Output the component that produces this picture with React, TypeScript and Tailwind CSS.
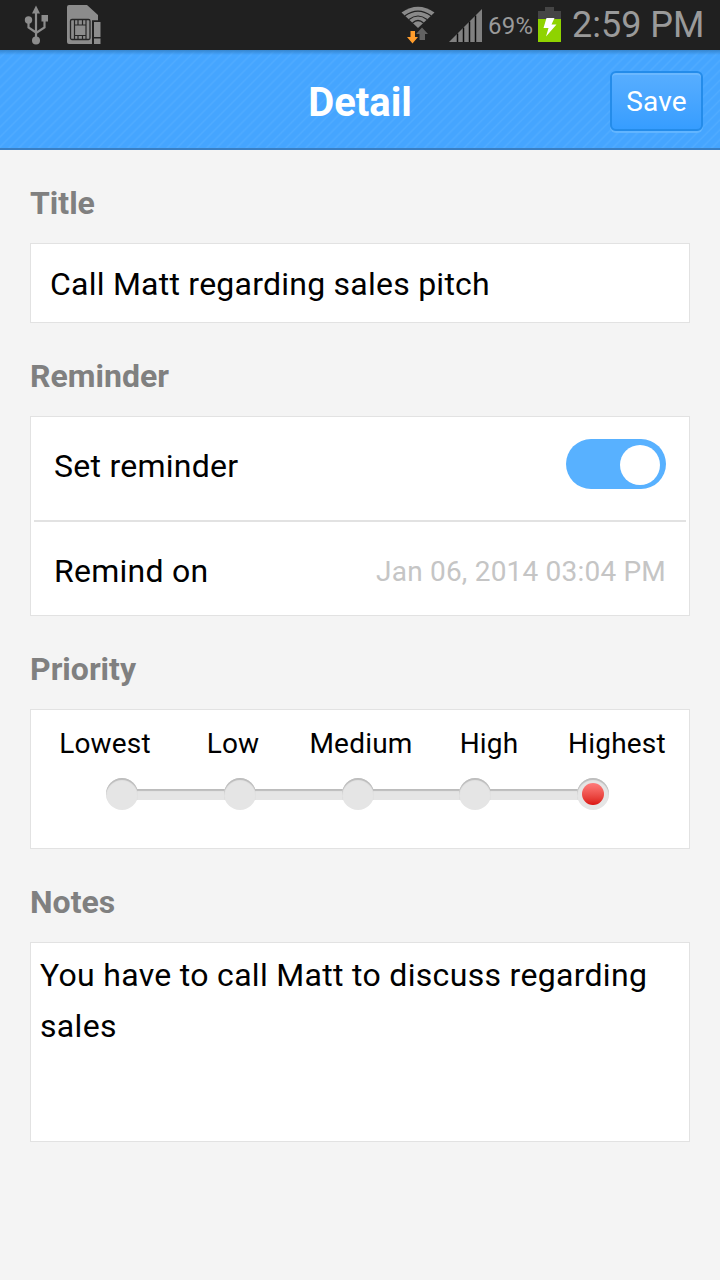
import { useState, type ReactNode } from "react";

const LEVELS = ["Lowest", "Low", "Medium", "High", "Highest"];

const UsbIcon = () => (
    <svg width="26" height="40" viewBox="0 0 26 40" fill="none" stroke="#8c8c8c" strokeWidth="2.2">
        <path d="M13 7v26M5.500 14v8.500l7.500 5M21.500 13v9.500L13 28" />
        <g fill="#8c8c8c" stroke="none">
            <path d="M13 0.500l4 8H9z" />
            <circle cx="5.500" cy="15" r="3.700" />
            <path d="M18.500 10h6.500v6.500h-6.500z" />
            <circle cx="13" cy="35.500" r="4" />
        </g>
    </svg>
);

const SimIcon = () => (
    <svg width="34" height="40" viewBox="0 0 34 40">
        <path d="M2 0h18l11 10v5.500h-6V39H2q-2 0-2-2V2q0-2 2-2z" fill="#8c8c8c" />
        <rect x="3.500" y="14.500" width="19.500" height="20" rx="1.500" fill="none" stroke="#262626" strokeWidth="1.300" />
        <path d="M7.500 15v19.500M19 15v19.500M8 20h11M8 30.500h11M11 15v5M15.500 15v5M11 30.500v4M15.500 30.500v4" stroke="#262626" strokeWidth="1.200" fill="none" />
        <path d="M25 15.500h9V40h-9z" fill="#202020" />
        <path d="M27 17h6.500v15H27zM27 33.500h6.500V39H27z" fill="#8c8c8c" />
    </svg>
);

const WifiIcon = () => (
    <svg width="34" height="38" viewBox="0 0 34 38">
        <path d="M0.500 6.500Q17-5 33.500 6.500L17 22z" fill="#8a8a8a" />
        <path d="M4 9.800Q17 0.500 30 9.800M8 13.500Q17 6.500 26 13.500M11.500 17Q17 12 22.500 17" stroke="#202020" strokeWidth="1.200" fill="none" />
        <path d="M9.500 25h4.500v6h3l-5.500 6.500L6 31h3.500z" fill="#ff9d2c" />
        <path d="M18.500 34v-6H15l6-6.500 6 6.500h-3v6z" fill="#626262" />
    </svg>
);

const SignalIcon = () => (
    <svg width="34" height="34" viewBox="0 0 34 34">
        <path d="M0 33L33 0v33z" fill="#808080" />
        <path d="M8.500 24.500v8.500M14.500 18.500V33M20.500 12.500v20.500M26.500 6.500v26.500" stroke="#0c0c0c" strokeWidth="1.500" />
    </svg>
);

const BatteryIcon = () => (
    <svg width="23" height="35" viewBox="0 0 23 35">
        <path d="M7 0h9v4h7v8H0V4h7z" fill="#454545" />
        <path d="M0 12h23v23H0z" fill="#8fd300" />
        <path d="M8.500 11h8l-3 6.500h5L8 29.500l2.500-8.500H5.500z" fill="#fff" />
    </svg>
);

const StatusBar = () => (
    <div className="flex h-[50px] items-start bg-[#202020] text-[#9a9a9a]">
        <div className="flex gap-[18px] pt-[5px] pl-[23px]">
            <UsbIcon />
            <SimIcon />
        </div>
        <div className="ml-auto flex pr-4">
            <div className="mr-[14px] pt-[6px]"><WifiIcon /></div>
            <div className="mr-[5px] pt-[9px]"><SignalIcon /></div>
            <span className="mr-[5px] w-[45px] pt-[10px] text-[24px] leading-8 tracking-[0.2px] whitespace-nowrap">69%</span>
            <div className="mr-[11px] pt-[7px]"><BatteryIcon /></div>
            <span className="w-[132px] text-[36px] leading-[50px] whitespace-nowrap">2:59 PM</span>
        </div>
    </div>
);

const Header = () => (
    <header className="grid h-[100px] grid-cols-[1fr_auto_1fr] items-center border-b-2 border-[#397fc4] bg-[linear-gradient(180deg,#3686cf_0px,#3686cf00_5px),repeating-linear-gradient(135deg,#45a5ff_0px,#45a5ff_4px,#50abff_5.5px,#45a5ff_7px)] px-[17px] pt-1">
        <h1 className="col-start-2 pt-1 text-[40px] leading-none font-bold text-white">Detail</h1>
        <button className="h-[60px] w-[93px] justify-self-end rounded-md border-2 border-[#248cea] bg-linear-to-b from-[#58aeff] to-[#369dff] pt-px text-[28px] tracking-[0.2px] text-white shadow-[0_2px_0_#62b5ff,inset_0_2px_0_#6bb8ff]">
            Save
        </button>
    </header>
);

const Section = ({ title, className, children }: { title: string; className: string; children: ReactNode }) => (
    <section>
        <h2 className="h-[93px] pt-[33px] text-[32px] leading-10 font-bold text-[#808080]">{title}</h2>
        <div className={`border border-[#e2e2e2] bg-white ${className}`}>{children}</div>
    </section>
);

const Switch = ({ checked, onChange }: { checked: boolean; onChange: (value: boolean) => void }) => (
    <button
        role="switch"
        aria-checked={checked}
        onClick={() => onChange(!checked)}
        className={`flex h-[50px] w-[100px] items-center rounded-full px-[6px] pt-[2px] ${checked ? "justify-end bg-[#58b1ff]" : "bg-[#d0d0d0]"}`}
    >
        <span className="size-10 rounded-full bg-white" />
    </button>
);

const PrioritySlider = ({ value, onChange }: { value: number; onChange: (value: number) => void }) => (
    <>
        <div className="grid grid-cols-5 pt-[14px] pr-2 pl-[10px] text-center text-[28px] leading-10 tracking-[0.2px]">
            {LEVELS.map((level) => (
                <span key={level}>{level}</span>
            ))}
        </div>
        <div className="ml-[75px] flex w-[503px] items-center pt-[14px]">
            {LEVELS.map((level, i) => (
                <div key={level} className={i > 0 ? "flex flex-1 items-center" : "flex items-center"}>
                    {i > 0 && <span className="-mx-px h-[11px] flex-1 bg-[#e5e5e5] shadow-[inset_0_2px_1px_#bcbcbc]" />}
                    <button
                        aria-label={level}
                        onClick={() => onChange(i)}
                        className="flex size-8 items-center justify-center rounded-full bg-[#e5e5e5] shadow-[inset_0_2px_1px_#bcbcbc]"
                    >
                        {i === value && <span className="size-[22px] rounded-full bg-linear-to-b from-[#ff7b7b] to-[#dc0d0d]" />}
                    </button>
                </div>
            ))}
        </div>
    </>
);

const App = () => {
    const [reminder, setReminder] = useState(true);
    const [priority, setPriority] = useState(4);

    return (
        <div className="h-[1280px] w-[720px] overflow-hidden bg-[#f4f4f4] font-['Roboto',sans-serif] text-black">
            <StatusBar />
            <Header />
            <main className="px-[30px]">
                <Section title="Title" className="h-20 pt-5 pl-[19px] text-[32px] leading-10 tracking-[0.24px]">
                    Call Matt regarding sales pitch
                </Section>

                <Section title="Reminder" className="h-[200px] px-[3px] text-[32px] tracking-[0.25px]">
                    <div className="flex h-[105px] justify-between border-b-2 border-[#e2e2e2] pt-[22px] pr-5 pl-5">
                        <span className="leading-[54px]">Set reminder</span>
                        <Switch checked={reminder} onChange={setReminder} />
                    </div>
                    <div className="flex h-[93px] items-center justify-between px-5 pt-1">
                        <span>Remind on</span>
                        <span className="pt-[3px] text-[28px] tracking-[0.2px] text-[#c5c5c5]">Jan 06, 2014 03:04 PM</span>
                    </div>
                </Section>

                <Section title="Priority" className="h-[140px]">
                    <PrioritySlider value={priority} onChange={setPriority} />
                </Section>

                <Section title="Notes" className="h-[200px] px-[9px] pt-[7px] text-[32px] leading-[51px] tracking-[0.31px]">
                    You have to call Matt to discuss regarding sales
                </Section>
            </main>
        </div>
    );
};

export default App;
